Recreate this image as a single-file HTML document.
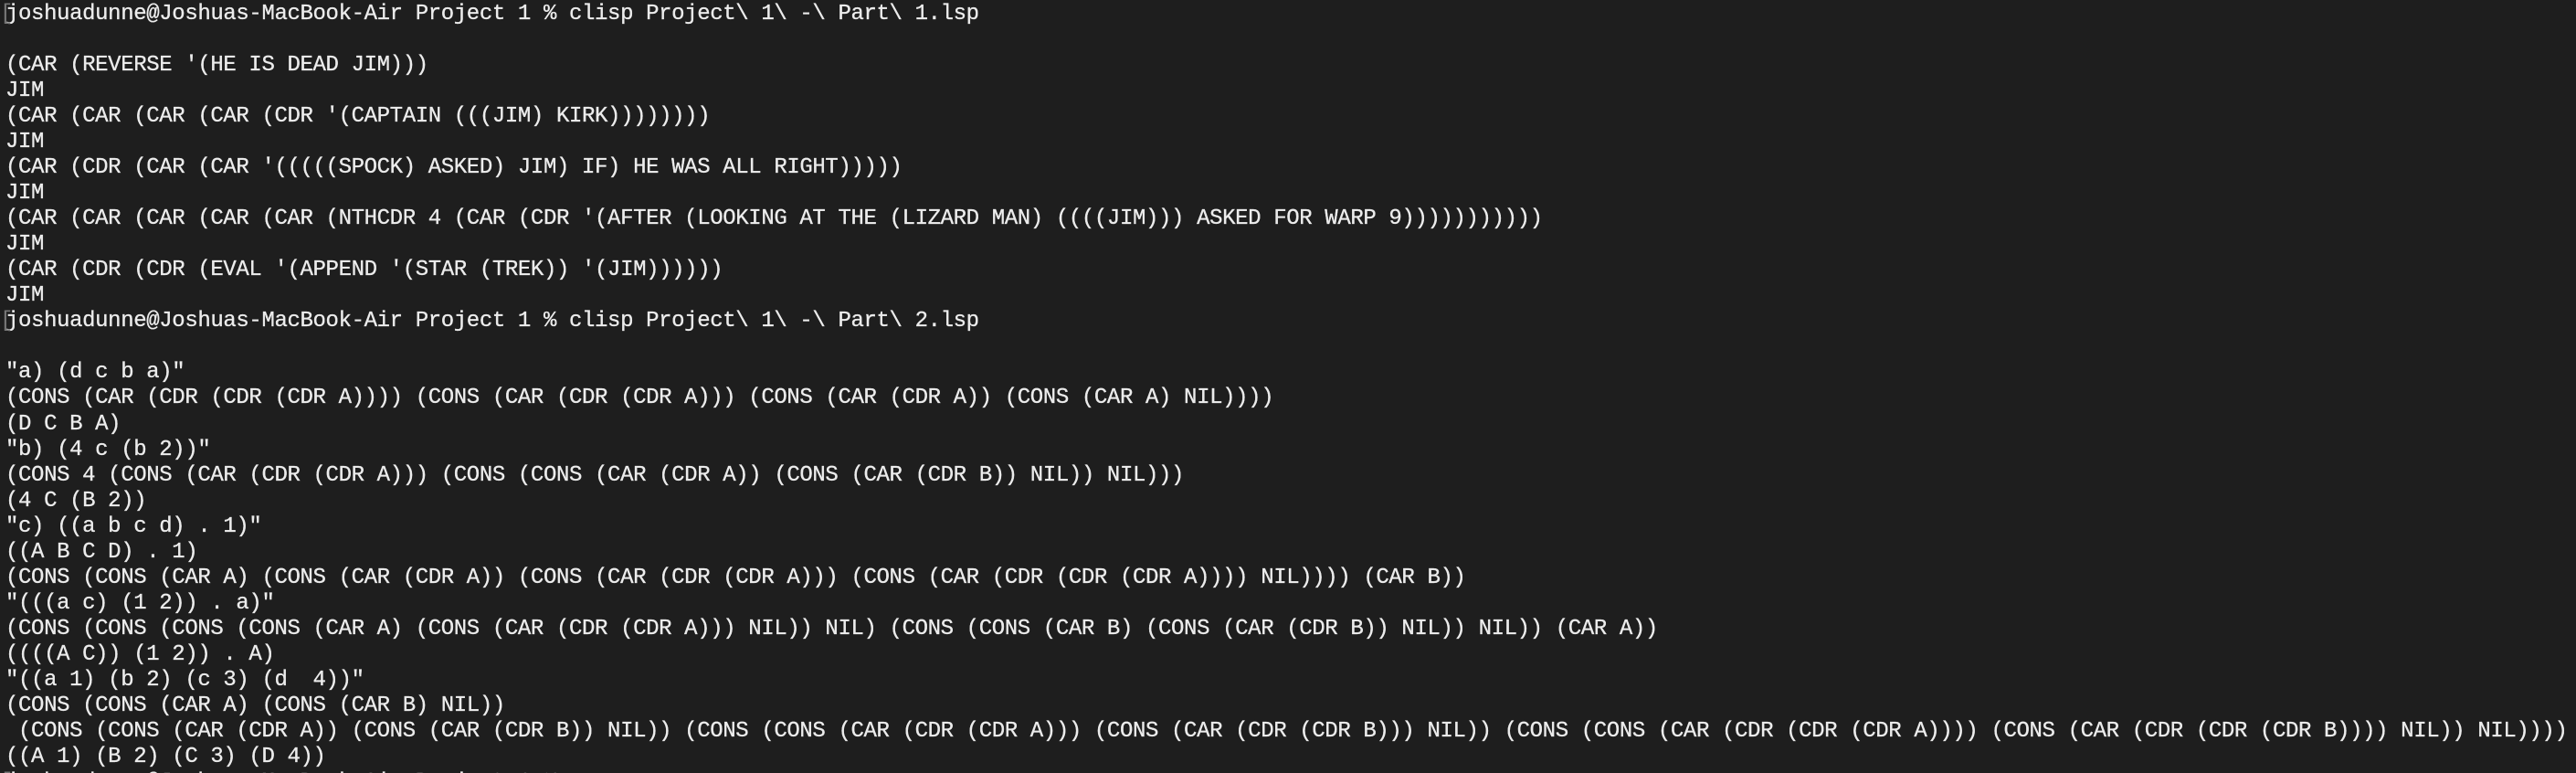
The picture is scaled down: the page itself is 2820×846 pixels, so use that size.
<!DOCTYPE html>
<html><head><meta charset="utf-8"><style>
html,body{margin:0;padding:0;background:#1e1e1e;width:2820px;height:846px;overflow:hidden}
pre{margin:0;padding:2px 0 0 6px;font-family:"Liberation Mono",monospace;font-size:24px;letter-spacing:-0.38px;line-height:28.03px;color:#ececec;white-space:pre;position:relative;-webkit-text-stroke:0.3px #ececec}
.m{position:absolute;left:0;color:#777;-webkit-text-stroke:0}
</style></head><body><pre><span class="m">[</span>joshuadunne@Joshuas-MacBook-Air Project 1 % clisp Project\ 1\ -\ Part\ 1.lsp

(CAR (REVERSE '(HE IS DEAD JIM)))
JIM
(CAR (CAR (CAR (CAR (CDR '(CAPTAIN (((JIM) KIRK))))))))
JIM
(CAR (CDR (CAR (CAR '(((((SPOCK) ASKED) JIM) IF) HE WAS ALL RIGHT)))))
JIM
(CAR (CAR (CAR (CAR (CAR (NTHCDR 4 (CAR (CDR '(AFTER (LOOKING AT THE (LIZARD MAN) ((((JIM))) ASKED FOR WARP 9)))))))))))
JIM
(CAR (CDR (CDR (EVAL '(APPEND '(STAR (TREK)) '(JIM))))))
JIM
<span class="m">[</span>joshuadunne@Joshuas-MacBook-Air Project 1 % clisp Project\ 1\ -\ Part\ 2.lsp

"a) (d c b a)"
(CONS (CAR (CDR (CDR (CDR A)))) (CONS (CAR (CDR (CDR A))) (CONS (CAR (CDR A)) (CONS (CAR A) NIL))))
(D C B A)
"b) (4 c (b 2))"
(CONS 4 (CONS (CAR (CDR (CDR A))) (CONS (CONS (CAR (CDR A)) (CONS (CAR (CDR B)) NIL)) NIL)))
(4 C (B 2))
"c) ((a b c d) . 1)"
((A B C D) . 1)
(CONS (CONS (CAR A) (CONS (CAR (CDR A)) (CONS (CAR (CDR (CDR A))) (CONS (CAR (CDR (CDR (CDR A)))) NIL)))) (CAR B))
"(((a c) (1 2)) . a)"
(CONS (CONS (CONS (CONS (CAR A) (CONS (CAR (CDR (CDR A))) NIL)) NIL) (CONS (CONS (CAR B) (CONS (CAR (CDR B)) NIL)) NIL)) (CAR A))
((((A C)) (1 2)) . A)
"((a 1) (b 2) (c 3) (d  4))"
(CONS (CONS (CAR A) (CONS (CAR B) NIL))
 (CONS (CONS (CAR (CDR A)) (CONS (CAR (CDR B)) NIL)) (CONS (CONS (CAR (CDR (CDR A))) (CONS (CAR (CDR (CDR B))) NIL)) (CONS (CONS (CAR (CDR (CDR (CDR A)))) (CONS (CAR (CDR (CDR (CDR B)))) NIL)) NIL))))
((A 1) (B 2) (C 3) (D 4))
<span class="m">[</span>joshuadunne@Joshuas-MacBook-Air Project 1 % </pre></body></html>
